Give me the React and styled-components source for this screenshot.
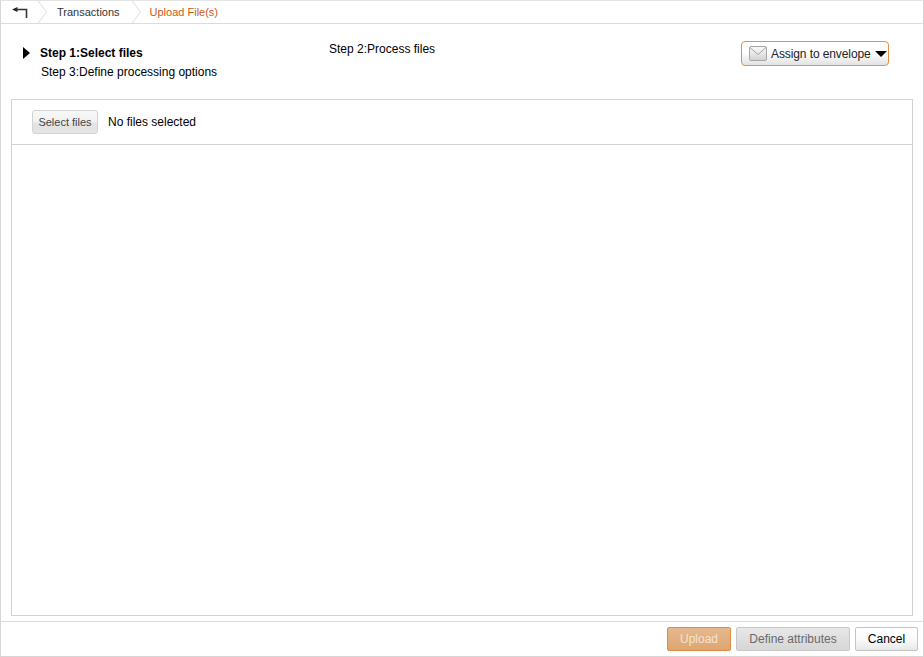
import React from "react";
import styled, { createGlobalStyle } from "styled-components";

const GlobalStyle = createGlobalStyle`
  html, body {
    margin: 0;
    padding: 0;
    background: #fff;
  }
  * {
    box-sizing: border-box;
  }
`;

const BackIcon = () => (
  <svg width="16" height="12" viewBox="0 0 16 12">
    <path d="M5.5 0 L0 2.5 L5.5 5 Z" fill="#222" />
    <path d="M4 2.5 H14.5 V11" fill="none" stroke="#333" strokeWidth="1.6" />
  </svg>
);

const Chevron = () => (
  <svg width="11" height="24" viewBox="0 0 11 24">
    <path d="M0.5 0 L9.5 12 L0.5 24" fill="none" stroke="#dedede" strokeWidth="1" />
  </svg>
);

const EnvelopeIcon = () => (
  <svg width="18" height="15" viewBox="0 0 18 15">
    <defs>
      <linearGradient id="env" x1="0" y1="0" x2="0" y2="1">
        <stop offset="0" stopColor="#fafafa" />
        <stop offset="1" stopColor="#d2d2d2" />
      </linearGradient>
    </defs>
    <rect x="0.5" y="0.5" width="17" height="14" rx="1.5" fill="url(#env)" stroke="#a6a6a6" />
    <path d="M1 1.5 L9 8.5 L17 1.5" fill="none" stroke="#a6a6a6" />
  </svg>
);

const App = () => {
  return (
    <>
      <GlobalStyle />
      <Page>
        <Breadcrumb>
          <BackButton>
            <BackIcon />
          </BackButton>
          <Chevron />
          <Crumb>Transactions</Crumb>
          <Chevron />
          <Crumb $active>Upload File(s)</Crumb>
        </Breadcrumb>

        <StepsBar>
          <StepsLeft>
            <ActiveStep>
              <Arrow />
              <strong>Step 1:Select files</strong>
            </ActiveStep>
            <Step3>Step 3:Define processing options</Step3>
          </StepsLeft>
          <Step2>Step 2:Process files</Step2>
          <EnvelopeButton>
            <EnvelopeIcon />
            <EnvelopeLabel>Assign to envelope</EnvelopeLabel>
            <Caret />
          </EnvelopeButton>
        </StepsBar>

        <Panel>
          <PanelToolbar>
            <SelectButton>Select files</SelectButton>
            <NoFiles>No files selected</NoFiles>
          </PanelToolbar>
        </Panel>

        <Footer>
          <UploadButton>Upload</UploadButton>
          <DefineButton>Define attributes</DefineButton>
          <CancelButton>Cancel</CancelButton>
        </Footer>
      </Page>
    </>
  );
};

export default App;

const Page = styled.div`
  width: 924px;
  height: 657px;
  display: flex;
  flex-direction: column;
  border: 1px solid #d6d6d6;
  border-top-color: #e4e4e4;
  font-family: "Liberation Sans", Arial, sans-serif;
  color: #000;
  overflow: hidden;
`;

const Breadcrumb = styled.div`
  height: 23px;
  flex: none;
  display: flex;
  align-items: center;
  border-bottom: 1px solid #dcdcdc;
  overflow: hidden;
`;

const BackButton = styled.div`
  width: 36px;
  padding: 2px 0 0 11px;
  display: flex;
  align-items: center;
`;

const Crumb = styled.div`
  padding: 0 11px 0 ${(p) => (p.$active ? "8px" : "9px")};
  font-size: 11px;
  color: ${(p) => (p.$active ? "#cc5a14" : "#333")};
`;

const StepsBar = styled.div`
  height: 75px;
  flex: none;
  display: flex;
  align-items: flex-start;
  padding-left: 22px;
  font-size: 12px;
`;

const StepsLeft = styled.div`
  width: 306px;
  padding-top: 22px;
`;

const ActiveStep = styled.div`
  display: flex;
  align-items: center;
  gap: 10px;
  height: 14px;
`;

const Arrow = styled.span`
  width: 0;
  height: 0;
  border-left: 7px solid #000;
  border-top: 6.5px solid transparent;
  border-bottom: 6.5px solid transparent;
`;

const Step3 = styled.div`
  margin: 5px 0 0 18px;
  line-height: 14px;
`;

const Step2 = styled.div`
  width: 412px;
  padding-top: 18px;
  line-height: 14px;
`;

const EnvelopeButton = styled.button`
  margin-top: 17px;
  width: 148px;
  height: 25px;
  flex: none;
  display: flex;
  align-items: center;
  padding: 0 0 0 7px;
  border: 1px solid #e88f45;
  border-radius: 4px;
  background: linear-gradient(#fff 0%, #fff 45%, #e2e2e2 100%);
  font-family: inherit;
  font-size: 12px;
  color: #222;
`;

const EnvelopeLabel = styled.span`
  margin-left: 4px;
  white-space: nowrap;
  letter-spacing: -0.1px;
`;

const Caret = styled.i`
  margin-left: 4px;
  width: 0;
  height: 0;
  border-top: 6px solid #000;
  border-left: 6.5px solid transparent;
  border-right: 6.5px solid transparent;
`;

const Panel = styled.div`
  width: 902px;
  height: 517px;
  flex: none;
  margin-left: 10px;
  border: 1px solid #d2d2d2;
`;

const PanelToolbar = styled.div`
  height: 45px;
  display: flex;
  align-items: center;
  padding-left: 20px;
  border-bottom: 1px solid #d2d2d2;
`;

const SelectButton = styled.button`
  width: 66px;
  height: 24px;
  padding: 0;
  border: 1px solid #d4d4d4;
  border-radius: 3px;
  background: linear-gradient(#f7f7f7 0%, #f2f2f2 46%, #e3e3e3 58%, #e4e4e4 100%);
  font-family: inherit;
  font-size: 11px;
  color: #444;
`;

const NoFiles = styled.span`
  margin-left: 10px;
  font-size: 12px;
`;

const Footer = styled.div`
  margin-top: 5px;
  flex: 1;
  display: flex;
  justify-content: flex-end;
  align-items: flex-start;
  gap: 5px;
  padding: 5px 5px 0 0;
  border-top: 1px solid #dcdcdc;
`;

const FooterButton = styled.button`
  height: 24px;
  padding: 0;
  border-radius: 2px;
  font-family: inherit;
  font-size: 12px;
`;

const UploadButton = styled(FooterButton)`
  width: 64px;
  border: 1px solid #e08a45;
  background: linear-gradient(#e6b88e, #dca670);
  color: #f3e3d2;
`;

const DefineButton = styled(FooterButton)`
  width: 114px;
  border: 1px solid #c8c8c8;
  background: linear-gradient(#e8e8e8, #d6d6d6);
  color: #6a6a6a;
`;

const CancelButton = styled(FooterButton)`
  width: 63px;
  border: 1px solid #c4c4c4;
  background: linear-gradient(#fff 0%, #fbfbfb 50%, #e8e8e8 100%);
  color: #000;
`;
